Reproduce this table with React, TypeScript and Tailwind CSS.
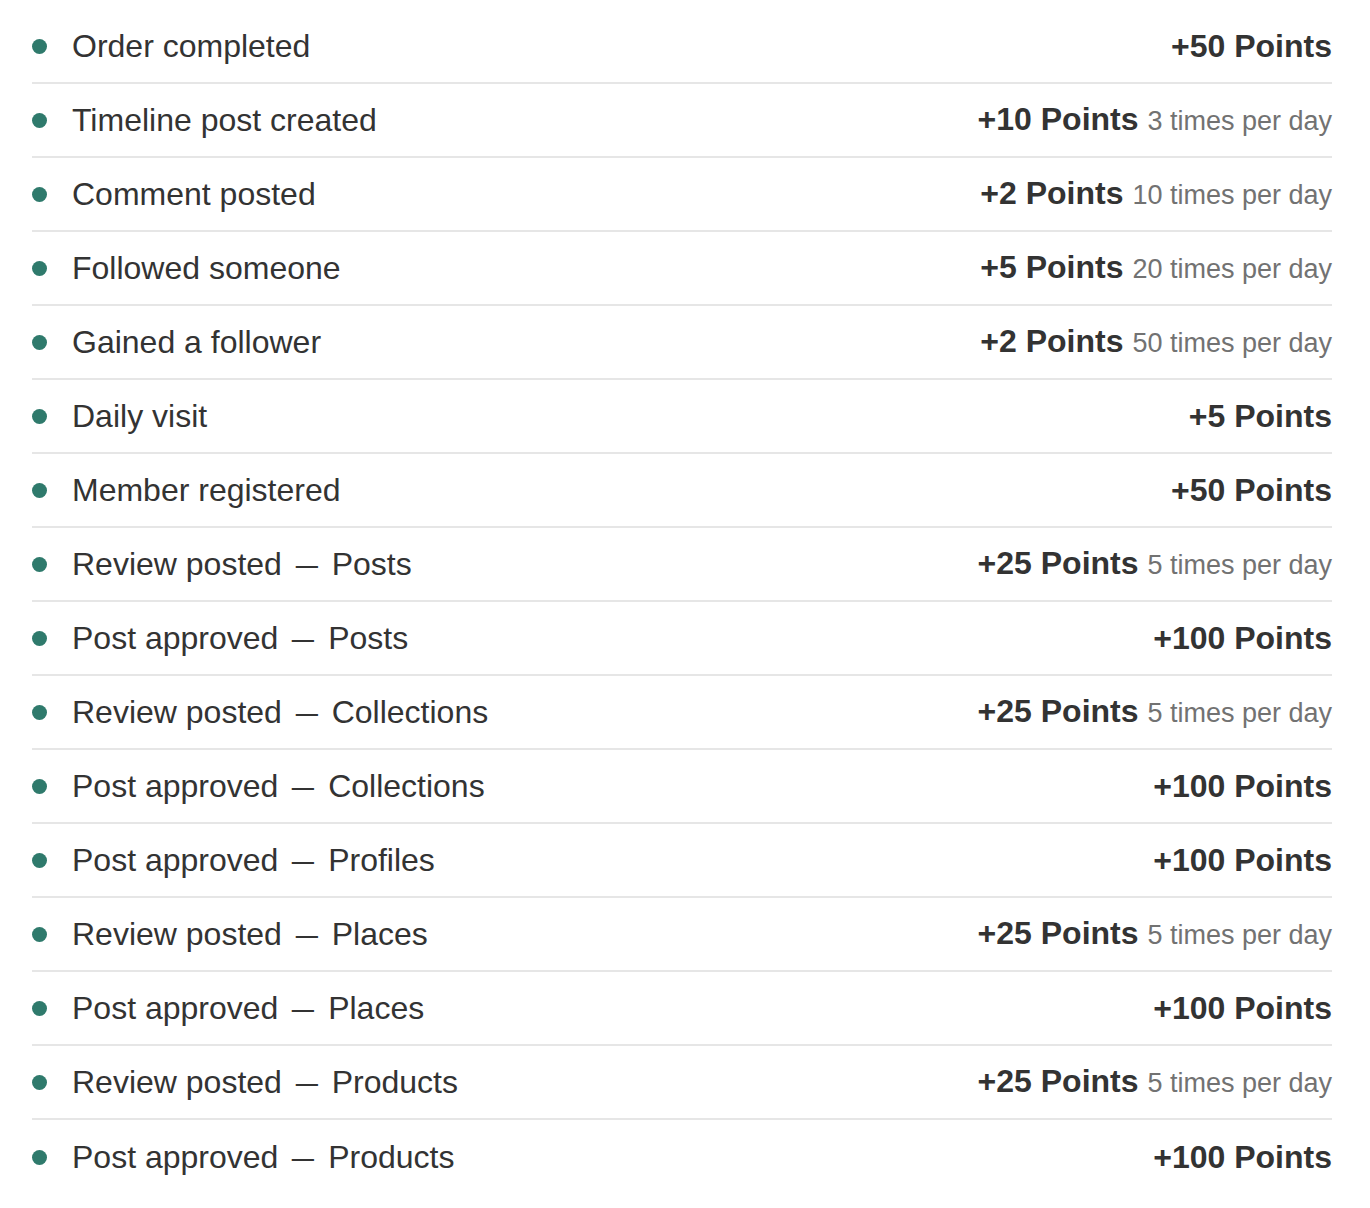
import React from "react";

type Row = { label: string; sub?: string; points: string; limit?: string };

const rows: Row[] = [
  { label: "Order completed", points: "+50 Points" },
  { label: "Timeline post created", points: "+10 Points", limit: "3 times per day" },
  { label: "Comment posted", points: "+2 Points", limit: "10 times per day" },
  { label: "Followed someone", points: "+5 Points", limit: "20 times per day" },
  { label: "Gained a follower", points: "+2 Points", limit: "50 times per day" },
  { label: "Daily visit", points: "+5 Points" },
  { label: "Member registered", points: "+50 Points" },
  { label: "Review posted", sub: "Posts", points: "+25 Points", limit: "5 times per day" },
  { label: "Post approved", sub: "Posts", points: "+100 Points" },
  { label: "Review posted", sub: "Collections", points: "+25 Points", limit: "5 times per day" },
  { label: "Post approved", sub: "Collections", points: "+100 Points" },
  { label: "Post approved", sub: "Profiles", points: "+100 Points" },
  { label: "Review posted", sub: "Places", points: "+25 Points", limit: "5 times per day" },
  { label: "Post approved", sub: "Places", points: "+100 Points" },
  { label: "Review posted", sub: "Products", points: "+25 Points", limit: "5 times per day" },
  { label: "Post approved", sub: "Products", points: "+100 Points" },
];

export default function App() {
  return (
    <div
      className="min-h-[1208px] w-full bg-white pt-[10px] pl-[32px]"
      style={{ fontFamily: '"Liberation Sans", Arial, sans-serif' }}
    >
      <ul className="w-[1300px]">
        {rows.map((r, i) => (
          <li
            key={i}
            className={`flex h-[74px] items-center justify-between text-[32px] leading-[36px] text-[#333333] ${
              i < rows.length - 1 ? "border-b-2 border-[#e6e6e6]" : ""
            }`}
          >
            <div className="flex items-center whitespace-nowrap">
              <span className="mr-[26px] inline-block h-[15px] w-[15px] shrink-0 rounded-full bg-[#2f7a6c]" />
              <span className="-ml-px">
                {r.label}
                {r.sub ? (
                  <>
                    {" "}
                    <span className="inline-block w-[32px] scale-x-125 text-center">–</span>{" "}
                    {r.sub}
                  </>
                ) : null}
              </span>
            </div>
            <div className="whitespace-nowrap">
              <span className="font-bold">{r.points}</span>
              {r.limit ? (
                <>
                  {" "}
                  <span className="text-[27px] text-[#727272]">{r.limit}</span>
                </>
              ) : null}
            </div>
          </li>
        ))}
      </ul>
    </div>
  );
}
